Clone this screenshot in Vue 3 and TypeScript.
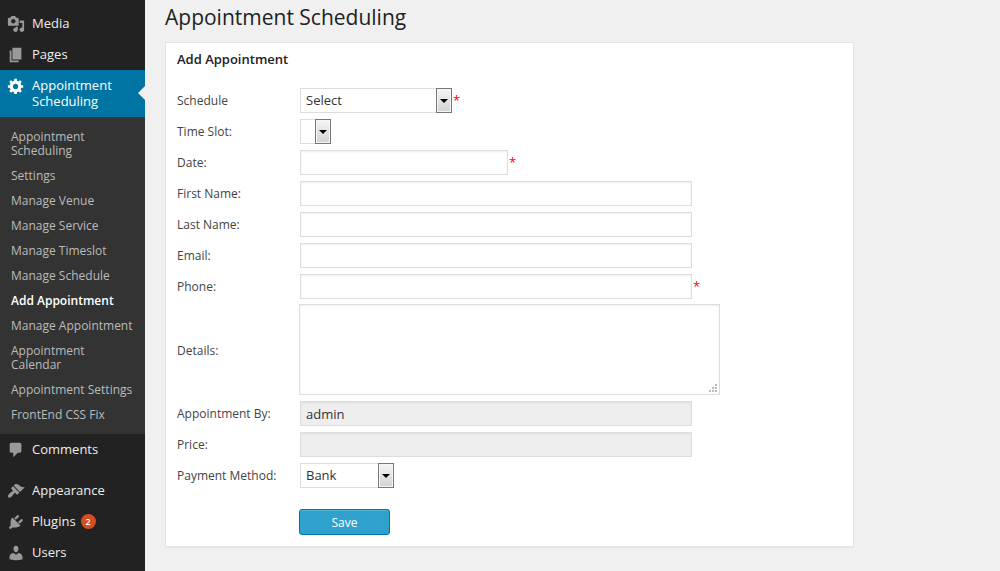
<script setup lang="ts">
import { ref } from 'vue'

interface MenuItem {
  label: string
  icon: string
  active?: boolean
  badge?: number
  separated?: boolean
  children?: string[]
}

const currentPage = 'Add Appointment'

const menu: MenuItem[] = [
  {
    label: 'Media',
    icon: 'M13 11V4c0-.55-.45-1-1-1h-1.67L9 1H5L3.67 3H2c-.55 0-1 .45-1 1v7c0 .55.45 1 1 1h10c.55 0 1-.45 1-1zM7 4.5c1.38 0 2.5 1.12 2.5 2.5S8.38 9.5 7 9.5 4.5 8.38 4.5 7 5.62 4.5 7 4.5zM14 6h5v10.5c0 1.38-1.12 2.5-2.5 2.5S14 17.88 14 16.5s1.12-2.5 2.5-2.5c.17 0 .34.02.5.05V9h-3V6zM10 14.05V13h2v3.5c0 1.38-1.12 2.5-2.5 2.5S7 17.88 7 16.5 8.12 14 9.5 14c.17 0 .34.02.5.05z',
  },
  { label: 'Pages', icon: 'M6 15V2h10v13H6zM5 16h8v2H3V5h2v11z' },
  {
    label: 'Appointment Scheduling',
    active: true,
    icon: 'M18 12h-2.18c-.17.7-.44 1.35-.81 1.93l1.54 1.54-2.1 2.1-1.54-1.54c-.58.36-1.23.63-1.91.79V19H8v-2.18c-.68-.16-1.33-.43-1.91-.79l-1.54 1.54-2.12-2.12 1.54-1.54c-.36-.58-.63-1.23-.79-1.91H1V9.03h2.17c.16-.7.44-1.35.8-1.94L2.43 5.55l2.1-2.1 1.54 1.54c.58-.37 1.24-.64 1.93-.81V2h3v2.18c.68.16 1.33.43 1.91.79l1.54-1.54 2.12 2.12-1.54 1.54c.36.59.64 1.24.8 1.94H18V12zm-8.5 1.5c1.66 0 3-1.34 3-3s-1.34-3-3-3-3 1.34-3 3 1.34 3 3 3z',
    children: [
      'Appointment Scheduling',
      'Settings',
      'Manage Venue',
      'Manage Service',
      'Manage Timeslot',
      'Manage Schedule',
      'Add Appointment',
      'Manage Appointment',
      'Appointment Calendar',
      'Appointment Settings',
      'FrontEnd CSS Fix',
    ],
  },
  {
    label: 'Comments',
    icon: 'M5 2h9c1.1 0 2 .9 2 2v7c0 1.1-.9 2-2 2h-2l-5 5v-5H5c-1.1 0-2-.9-2-2V4c0-1.1.9-2 2-2z',
  },
  {
    label: 'Appearance',
    separated: true,
    icon: 'M14.48 11.06L7.41 3.99l1.5-1.5c.5-.56 2.3-.47 3.51.32 1.21.8 1.43 1.28 2.91 2.1 1.18.64 2.45 1.26 4.45.85zm-.71.71L6.7 4.7 4.93 6.47c-.39.39-.39 1.02 0 1.41l1.06 1.06c.39.39.39 1.03 0 1.42-.6.6-1.43 1.11-2.21 1.69-.35.26-.7.53-1.01.84C1.43 14.23.4 16.08 1.4 17.07c.99 1 2.84-.03 4.18-1.36.31-.31.58-.66.85-1.02.57-.78 1.08-1.61 1.69-2.21.39-.39 1.02-.39 1.41 0l1.06 1.06c.39.39 1.02.39 1.41 0z',
  },
  {
    label: 'Plugins',
    badge: 2,
    icon: 'M13.11 4.36L9.87 7.6 8 5.73l3.24-3.24c.35-.34 1.05-.2 1.56.32.52.51.66 1.21.31 1.55zm-8 1.77l.91-1.12 9.01 9.01-1.19.84c-.71.71-2.63 1.16-3.82 1.16H6.14L4.9 17.26c-.59.59-1.54.59-2.12 0-.59-.58-.59-1.53 0-2.12l1.24-1.24v-3.88c0-1.13.4-3.19 1.09-3.89zm7.26 3.97l3.24-3.24c.34-.35 1.04-.21 1.55.31.52.51.66 1.21.31 1.55l-3.24 3.25z',
  },
  {
    label: 'Users',
    icon: 'M10 9.25c-2.27 0-2.73-3.44-2.73-3.44C7 4.02 7.82 2 9.97 2c2.16 0 2.98 2.02 2.71 3.81 0 0-.41 3.44-2.68 3.44zm0 2.57L12.72 10c2.39 0 4.52 2.33 4.52 4.53v2.49s-3.65 1.13-7.24 1.13c-3.65 0-7.24-1.13-7.24-1.13v-2.49c0-2.25 1.94-4.48 4.47-4.48z',
  },
]

const schedule = ref('Select')
const timeSlot = ref('')
const date = ref('')
const firstName = ref('')
const lastName = ref('')
const email = ref('')
const phone = ref('')
const details = ref('')
const appointmentBy = ref('admin')
const price = ref('')
const payment = ref('Bank')
</script>

<template>
  <div class="admin">
    <nav class="sidebar" aria-label="Main menu">
      <ul class="menu">
        <li v-for="item in menu" :key="item.label" :class="{ separated: item.separated }">
          <a href="#" class="menu-link" :class="{ active: item.active }">
            <svg class="icon" viewBox="0 0 20 20" aria-hidden="true"><path :d="item.icon" fill-rule="evenodd" /></svg>
            <span class="menu-label">{{ item.label }}</span>
            <span v-if="item.badge" class="badge">{{ item.badge }}</span>
          </a>
          <ul v-if="item.children" class="submenu">
            <li v-for="child in item.children" :key="child">
              <a href="#" class="sub-link" :class="{ current: child === currentPage }">{{ child }}</a>
            </li>
          </ul>
        </li>
      </ul>
    </nav>

    <main class="content">
      <h1>Appointment Scheduling</h1>
      <form class="card" @submit.prevent>
        <h2>Add Appointment</h2>
        <div class="row">
          <label for="schedule">Schedule</label>
          <div class="control">
            <span class="select wide">
              <select id="schedule" v-model="schedule"><option>Select</option></select>
              <span class="arrow"><svg viewBox="0 0 8 4"><path d="M0 0h8L4 4z" /></svg></span>
            </span>
            <span class="required">*</span>
          </div>
        </div>
        <div class="row">
          <label for="slot">Time Slot:</label>
          <div class="control">
            <span class="select tiny">
              <select id="slot" v-model="timeSlot"><option></option></select>
              <span class="arrow"><svg viewBox="0 0 8 4"><path d="M0 0h8L4 4z" /></svg></span>
            </span>
          </div>
        </div>
        <div class="row">
          <label for="date">Date:</label>
          <div class="control">
            <input id="date" v-model="date" class="short" type="text" />
            <span class="required">*</span>
          </div>
        </div>
        <div class="row">
          <label for="first">First Name:</label>
          <div class="control"><input id="first" v-model="firstName" type="text" /></div>
        </div>
        <div class="row">
          <label for="last">Last Name:</label>
          <div class="control"><input id="last" v-model="lastName" type="text" /></div>
        </div>
        <div class="row">
          <label for="email">Email:</label>
          <div class="control"><input id="email" v-model="email" type="text" /></div>
        </div>
        <div class="row">
          <label for="phone">Phone:</label>
          <div class="control">
            <input id="phone" v-model="phone" type="text" />
            <span class="required">*</span>
          </div>
        </div>
        <div class="row">
          <label for="details">Details:</label>
          <div class="control area">
            <textarea id="details" v-model="details"></textarea>
            <svg class="grip" viewBox="0 0 8 8" aria-hidden="true">
              <path d="M6 0h2v2H6zM3 3h2v2H3zM6 3h2v2H6zM0 6h2v2H0zM3 6h2v2H3zM6 6h2v2H6z" />
            </svg>
          </div>
        </div>
        <div class="row">
          <label for="by">Appointment By:</label>
          <div class="control"><input id="by" v-model="appointmentBy" type="text" readonly /></div>
        </div>
        <div class="row">
          <label for="price">Price:</label>
          <div class="control"><input id="price" v-model="price" type="text" readonly /></div>
        </div>
        <div class="row">
          <label for="payment">Payment Method:</label>
          <div class="control">
            <span class="select medium">
              <select id="payment" v-model="payment"><option>Bank</option></select>
              <span class="arrow"><svg viewBox="0 0 8 4"><path d="M0 0h8L4 4z" /></svg></span>
            </span>
          </div>
        </div>
        <div class="row actions">
          <button type="submit">Save</button>
        </div>
      </form>
    </main>
  </div>
</template>

<style>
body {
  margin: 0;
  background: #f0f0f0;
}
</style>

<style scoped>
* {
  box-sizing: border-box;
}
.admin {
  display: flex;
  min-height: 100vh;
  font-family: 'Open Sans', sans-serif;
  font-size: 12px;
  color: #444;
  background: #f0f0f0;
}
.sidebar {
  flex: none;
  width: 145px;
  padding-top: 8px;
  background: #222;
}
.menu,
.submenu {
  margin: 0;
  padding: 0;
  list-style: none;
}
.separated {
  margin-top: 10px;
}
.menu-link {
  position: relative;
  display: flex;
  align-items: flex-start;
  min-height: 31px;
  padding: 7px 8px 8px 7px;
  font-size: 13px;
  line-height: 16px;
  color: #eee;
  text-decoration: none;
}
.menu-link.active {
  color: #fff;
  background: #0074a2;
}
.menu-link.active::after {
  content: '';
  position: absolute;
  right: 0;
  top: 16px;
  border: 7px solid transparent;
  border-left: 0;
  border-right-color: #f0f0f0;
}
.icon {
  flex: none;
  width: 18px;
  height: 18px;
  margin: 0 7px -2px 0;
  fill: #999;
}
.active .icon {
  fill: #fff;
}
.badge {
  width: 15px;
  height: 15px;
  margin: 1px 0 0 5px;
  border-radius: 50%;
  background: #d54e21;
  color: #fff;
  font-size: 9px;
  font-weight: 600;
  line-height: 15px;
  text-align: center;
}
.submenu {
  padding: 7px 0;
  background: #333;
}
.sub-link {
  display: block;
  padding: 6px 11px 5px;
  font-size: 12px;
  line-height: 14px;
  color: #bbb;
  text-decoration: none;
}
.sub-link.current {
  color: #fff;
  font-weight: 600;
}
.content {
  flex: 1;
  min-width: 0;
  padding: 0 20px 24px;
}
h1 {
  margin: 0;
  padding: 2px 0 10px;
  font-size: 21px;
  font-weight: 400;
  line-height: 30px;
  color: #222;
}
.card {
  display: flex;
  flex-direction: column;
  gap: 4px;
  max-width: 689px;
  padding: 7px 11px 11px;
  border: 1px solid #e5e5e5;
  background: #fff;
  box-shadow: 0 1px 1px rgba(0, 0, 0, 0.04);
}
h2 {
  margin: 0 0 15px;
  font-size: 13px;
  font-weight: 600;
  line-height: 18px;
  color: #222;
}
.row {
  display: grid;
  grid-template-columns: 122px minmax(0, 1fr);
  align-items: center;
}
.control {
  display: flex;
  align-items: center;
}
input,
select {
  width: 392px;
  max-width: 100%;
  height: 25px;
  margin: 1px;
  padding: 0 5px;
  border: 1px solid #ddd;
  border-radius: 0;
  outline: none;
  background: #fff;
  box-shadow: inset 0 1px 2px rgba(0, 0, 0, 0.07);
  font-family: inherit;
  font-size: 13px;
  color: #333;
}
input.short {
  width: 208px;
}
input:read-only {
  background: #eee;
}
.select {
  position: relative;
  display: flex;
  margin: 1px;
}
.select select {
  width: 100%;
  margin: 0;
  padding: 0 6px 1px 5px;
  appearance: none;
  box-shadow: none;
}
.wide {
  width: 152px;
}
.tiny {
  width: 31px;
}
.medium {
  width: 94px;
}
.arrow {
  position: absolute;
  top: 0;
  right: 0;
  bottom: 0;
  display: flex;
  align-items: center;
  justify-content: center;
  width: 16px;
  border: 1px solid #777;
  background: linear-gradient(#f4f4f4, #d2d2d2);
  box-shadow: inset 0 0 0 1px #f6f6f6;
  pointer-events: none;
}
.arrow svg {
  width: 8px;
  height: 4px;
}
.required {
  align-self: flex-start;
  padding-top: 4px;
  font-size: 13px;
  line-height: 18px;
  color: #f00;
}
.area {
  position: relative;
  width: 421px;
  max-width: 100%;
}
textarea {
  width: 100%;
  height: 91px;
  margin: 0 0 1px;
  padding: 4px 5px;
  border: 1px solid #ddd;
  outline: none;
  resize: none;
  background: #fff;
  box-shadow: inset 0 1px 2px rgba(0, 0, 0, 0.07);
  font-family: inherit;
  font-size: 13px;
  color: #333;
}
.grip {
  position: absolute;
  right: 3px;
  bottom: 4px;
  width: 8px;
  height: 8px;
  fill: #bbb;
}
.actions {
  margin-top: 16px;
}
button {
  grid-column: 2;
  justify-self: start;
  width: 91px;
  height: 26px;
  padding: 0;
  border: 1px solid #0074a2;
  border-radius: 3px;
  background: #2ea2cc;
  box-shadow: inset 0 1px 0 rgba(120, 200, 230, 0.5);
  font-family: inherit;
  font-size: 12px;
  color: #fff;
}
</style>
